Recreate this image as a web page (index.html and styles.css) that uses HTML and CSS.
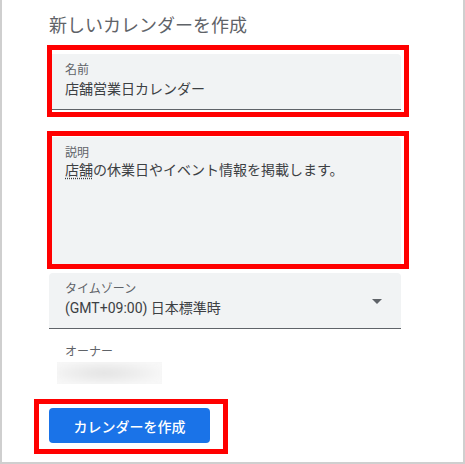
FILE: index.html
```html
<!DOCTYPE html>
<html lang="ja">
<head>
<meta charset="utf-8">
<title>新しいカレンダーを作成</title>
<link rel="stylesheet" href="styles.css">
</head>
<body>
<div class="page">
  <h1 class="title">新しいカレンダーを作成</h1>

  <div class="field field-name">
    <div class="label">名前</div>
    <div class="value">店舗営業日カレンダー</div>
  </div>

  <div class="field field-desc">
    <div class="label">説明</div>
    <div class="value"><span class="spell">店舗</span>の休業日やイベント情報を掲載します。</div>
  </div>

  <div class="field field-tz">
    <div class="label">タイムゾーン</div>
    <div class="value latin">(GMT+09:00) 日本標準時</div>
    <svg class="arrow" width="10" height="5" viewBox="0 0 10 5"><path d="M0 0h10L5 5z" fill="#5f6368"/></svg>
  </div>

  <div class="owner">
    <div class="label">オーナー</div>
    <div class="blur"><div class="blur-inner"></div></div>
  </div>

  <button class="create">カレンダーを作成</button>

  <div class="mark mark-1"></div>
  <div class="mark mark-2"></div>
  <div class="mark mark-3"></div>
</div>
</body>
</html>
```

FILE: styles.css
```css
* { box-sizing: border-box; }
html, body { margin: 0; padding: 0; background: #fff; }
body { font-family: "Noto Sans CJK JP", sans-serif; }

.page {
  position: relative;
  width: 465px;
  height: 464px;
  border: 2px solid #cfcfcf;
  border-top: none;
  padding: 12px 0 0 47px;
  display: flex;
  flex-direction: column;
  align-items: flex-start;
}

.title {
  margin: 0;
  font-size: 18px;
  line-height: 24px;
  font-weight: 400;
  color: #5f6368;
}

.field {
  position: relative;
  width: 352px;
  background: #f1f3f4;
  border-radius: 4px 4px 0 0;
  border-bottom: 1px solid #5f6368;
  padding: 8px 16px 0;
}
.field-name { margin-top: 18px; height: 56px; }
.field-desc { margin-top: 27px; height: 129px; }
.field-tz { margin-top: 7px; height: 56px; }

.label {
  font-size: 12px;
  line-height: 14px;
  color: #5f6368;
}
.value {
  margin-top: 2px;
  font-size: 14px;
  line-height: 20px;
  color: #3c4043;
}
.field-desc .value { margin-top: 0; }
.latin { font-family: Roboto, "Noto Sans CJK JP", sans-serif; margin-top: 3px; }

.spell {
  text-decoration: underline dotted #3c4043;
  text-underline-offset: 3px;
}

.arrow {
  position: absolute;
  right: 19px;
  top: 26px;
}

.owner {
  margin-top: 15px;
  width: 352px;
}
.owner .label { padding-left: 16px; }
.blur {
  margin-top: 4px;
  margin-left: 8px;
  width: 105px;
  height: 22px;
  overflow: hidden;
  background: #f7f7f7;
}
.blur-inner {
  width: 100%;
  height: 100%;
  background: radial-gradient(ellipse 60% 60% at 45% 50%, #e2e2e2, #efefef 60%, #f8f8f8);
  filter: blur(3px);
}

.create {
  margin-top: 24px;
  width: 161px;
  height: 35px;
  border: none;
  border-radius: 4px;
  background: #1a73e8;
  color: #fff;
  font-family: "Noto Sans CJK JP", sans-serif;
  font-size: 14px;
  font-weight: 500;
  padding: 0;
}

.mark {
  position: absolute;
  border: 5px solid #ff0000;
  pointer-events: none;
}
.mark-1 { left: 45px; top: 45px; width: 362px; height: 72px; }
.mark-2 { left: 45px; top: 131px; width: 362px; height: 138px; }
.mark-3 { left: 32px; top: 399px; width: 194px; height: 55px; }
```
